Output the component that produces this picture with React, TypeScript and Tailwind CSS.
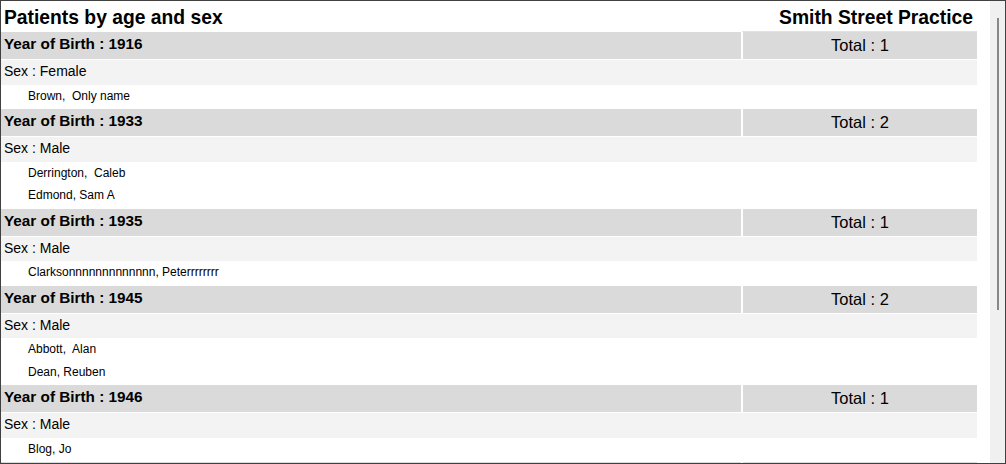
import React from "react";

type Group = { year: number; sex: string; names: string[] };

const groups: Group[] = [
  { year: 1916, sex: "Female", names: ["Brown,  Only name"] },
  { year: 1933, sex: "Male", names: ["Derrington,  Caleb", "Edmond, Sam A"] },
  { year: 1935, sex: "Male", names: ["Clarksonnnnnnnnnnnnn, Peterrrrrrrr"] },
  { year: 1945, sex: "Male", names: ["Abbott,  Alan", "Dean, Reuben"] },
  { year: 1946, sex: "Male", names: ["Blog, Jo"] },
];

function GroupBlock({ g }: { g: Group }) {
  return (
    <div className="flex flex-col w-[976px] shrink-0">
      <div className="flex h-[27px] gap-[2px]">
        <div className="w-[740px] bg-[#dadada] pl-[3px] pt-[3px] text-[15.3px] leading-[18px] font-bold text-black">
          Year of Birth : {g.year}
        </div>
        <div className="flex-1 bg-[#dadada] pt-[3px] text-center text-[16.5px] leading-[20px] text-black">
          Total : {g.names.length}
        </div>
      </div>
      <div className="mt-px h-[24.5px] bg-[#f3f3f3] pl-[3px] pt-[3px] text-[14px] leading-[17px] text-black">
        Sex : {g.sex}
      </div>
      <div className="flex flex-col pt-[2px]">
        {g.names.map((n) => (
          <div
            key={n}
            className="h-[22.5px] pl-[27px] pt-[2px] text-[12px] leading-[14px] text-black whitespace-pre"
          >
            {n}
          </div>
        ))}
      </div>
    </div>
  );
}

export default function App() {
  return (
    <div
      className="w-[1006px] h-[464px] border border-[#404040] bg-white flex overflow-hidden"
      style={{ fontFamily: '"Liberation Sans", Arial, sans-serif' }}
    >
      <div className="flex-1 flex flex-col overflow-hidden">
        <div className="flex h-[31px] w-[976px] shrink-0">
          <div className="flex-1 pl-[3px] pt-[6px] text-[19.3px] leading-[22px] font-bold text-black">
            Patients by age and sex
          </div>
          <div className="w-[235px] border-b border-[#e2e2e2] pr-[4px] pt-[6px] text-right text-[19.3px] leading-[22px] font-bold text-black">
            Smith Street Practice
          </div>
        </div>
        {groups.map((g) => (
          <GroupBlock key={g.year} g={g} />
        ))}
        <div className="flex h-[27px] w-[976px] shrink-0 gap-[2px]">
          <div className="w-[740px] bg-[#dadada]" />
          <div className="flex-1 bg-[#dadada]" />
        </div>
      </div>
      <div className="w-[15px] shrink-0 bg-[#f0f0f0] pt-[17px]">
        <div className="ml-[7px] h-[292px] w-[2px] bg-[#888888]" />
      </div>
    </div>
  );
}
